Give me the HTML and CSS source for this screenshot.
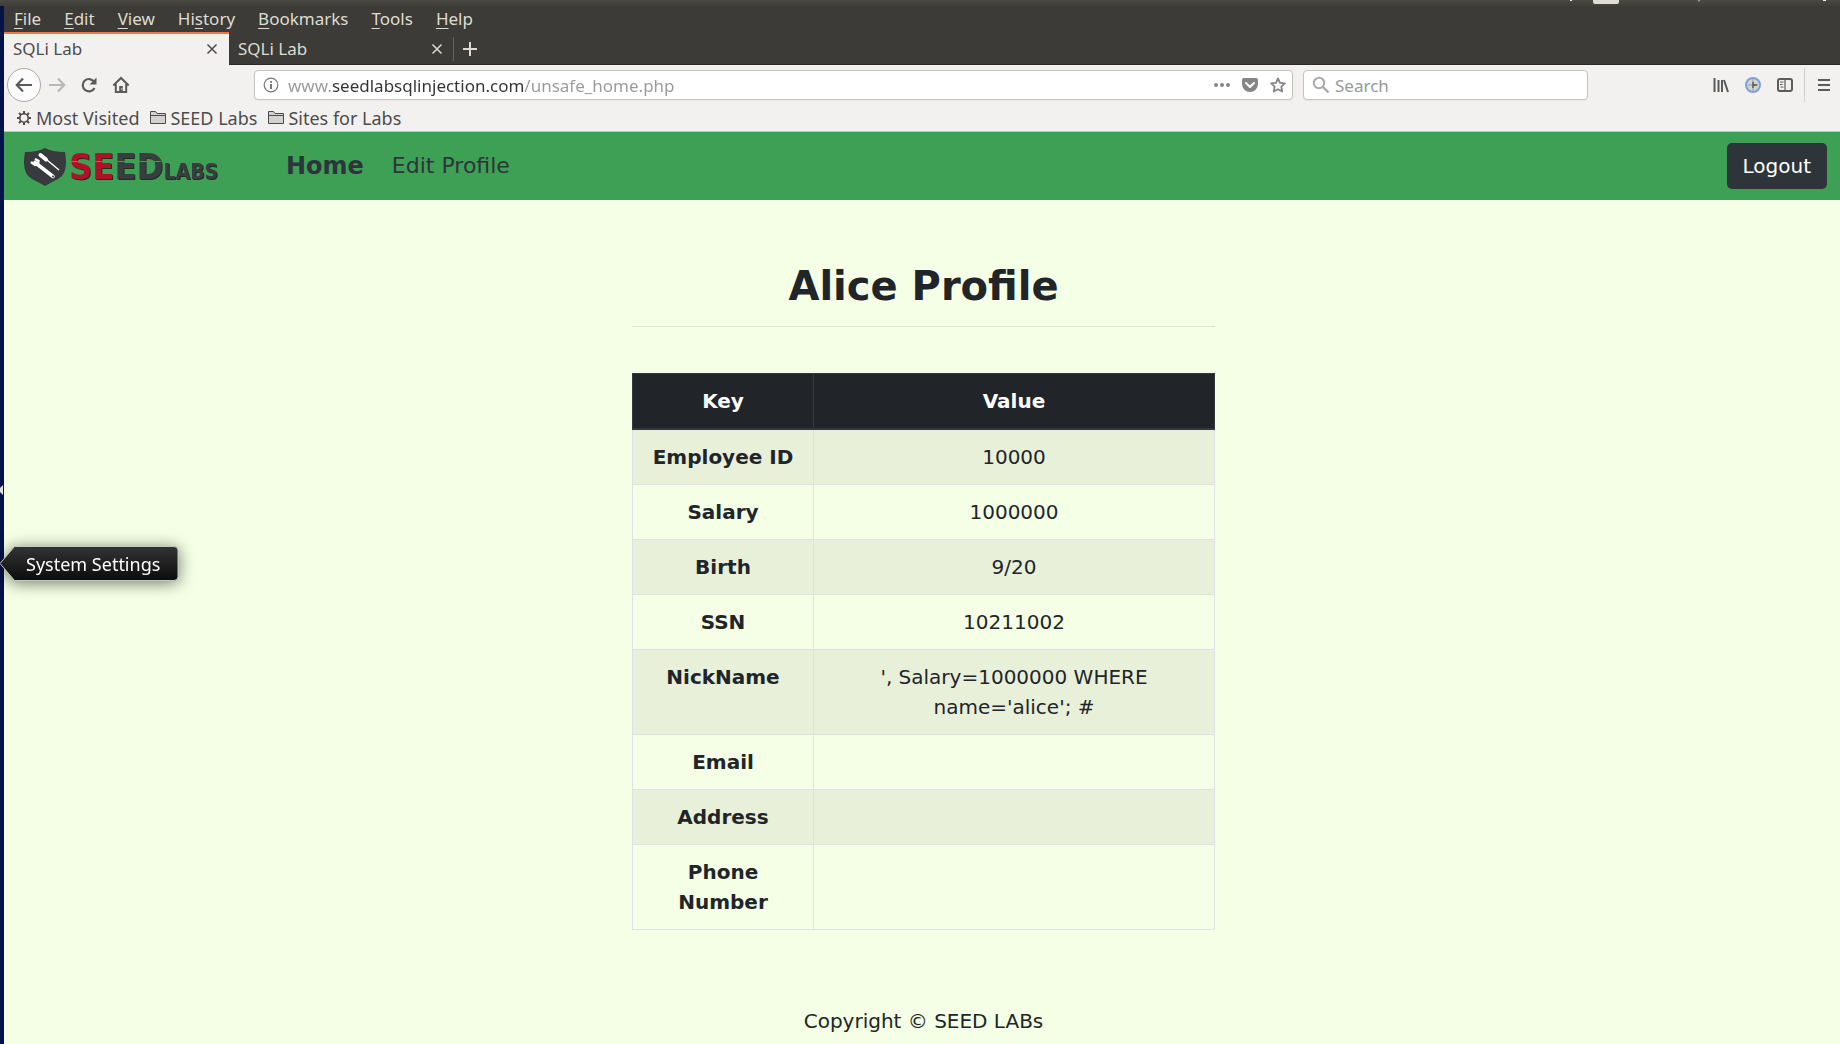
FILE: index.html
```html
<!DOCTYPE html>
<html lang="en">
<head>
<meta charset="utf-8">
<meta name="viewport" content="width=device-width, initial-scale=1">
<title>SQLi Lab</title>
<link rel="stylesheet" href="styles.css">
</head>
<body>
<div class="panel" aria-hidden="true">
  <svg class="panel-icons" width="270" height="5" viewBox="0 0 270 5"><path d="M0 0h2v1H0zM253 0h3v1h-3z" fill="#eee"/><path d="M23 0h26v2q0 2-2 2H25q-2 0-2-2z" fill="#dfdbd2"/><path d="M128 1l2-1" stroke="#999" stroke-width="1.5"/></svg>
</div>
<div class="desktop">
  <header class="chrome">
    <nav class="menubar" aria-label="Application menu">
      <button type="button"><u>F</u>ile</button>
      <button type="button"><u>E</u>dit</button>
      <button type="button"><u>V</u>iew</button>
      <button type="button">Hi<u>s</u>tory</button>
      <button type="button"><u>B</u>ookmarks</button>
      <button type="button"><u>T</u>ools</button>
      <button type="button"><u>H</u>elp</button>
    </nav>
    <div class="tabs">
      <div class="tab tab-active"><span>SQLi Lab</span><button type="button" aria-label="Close tab"><svg width="12" height="12" viewBox="0 0 12 12"><path d="M1.500 1.500l9 9m0-9l-9 9" stroke="currentColor" stroke-width="1.500" fill="none"/></svg></button></div>
      <div class="tab"><span>SQLi Lab</span><button type="button" aria-label="Close tab"><svg width="12" height="12" viewBox="0 0 12 12"><path d="M1.500 1.500l9 9m0-9l-9 9" stroke="currentColor" stroke-width="1.500" fill="none"/></svg></button></div>
      <button class="new-tab" type="button" aria-label="New tab"><svg width="14" height="14" viewBox="0 0 14 14"><path d="M7 0v14M0 7h14" stroke="currentColor" stroke-width="2"/></svg></button>
    </div>
    <div class="toolbar">
      <div class="nav-buttons">
        <button class="back" type="button" aria-label="Back"><svg width="18" height="16" viewBox="0 0 18 16"><path d="M17 8H2M8 1.500L1.800 8 8 14.500" fill="none" stroke="currentColor" stroke-width="2.200"/></svg></button>
        <button class="forward" type="button" aria-label="Forward"><svg width="18" height="16" viewBox="0 0 18 16"><path d="M1 8h15M10 1.500L16.200 8 10 14.500" fill="none" stroke="currentColor" stroke-width="2.200"/></svg></button>
        <button type="button" aria-label="Reload"><svg width="16" height="16" viewBox="0 0 16 16"><path d="M13 4.600A6.200 6.200 0 1 0 13.500 11" fill="none" stroke="currentColor" stroke-width="2.200"/><path d="M15.500 0.500V7.500H8.500z" fill="currentColor"/></svg></button>
        <button type="button" aria-label="Home"><svg width="18" height="18" viewBox="0 0 18 18"><path d="M1.300 9.500L9 2l7.700 7.500M3.800 8v8h10.400V8" fill="none" stroke="currentColor" stroke-width="2"/><path d="M7.200 10h3.600v6H7.200z" fill="currentColor"/><circle cx="9.800" cy="13" r=".7" fill="#f3f1f0"/></svg></button>
      </div>
      <div class="field url-field">
        <svg width="16" height="16" viewBox="0 0 16 16"><circle cx="8" cy="8" r="6.800" fill="none" stroke="#777" stroke-width="1.200"/><path d="M8 7v5M8 4v1.800" stroke="#777" stroke-width="2"/></svg>
        <input class="url" type="text" aria-label="Address" value="www.seedlabsqlinjection.com/unsafe_home.php">
        <div class="page-actions">
          <button type="button" aria-label="Page actions"><svg width="16" height="16" viewBox="0 0 16 16"><g fill="currentColor"><circle cx="2" cy="8" r="2"/><circle cx="8" cy="8" r="2"/><circle cx="14" cy="8" r="2"/></g></svg></button>
          <button type="button" aria-label="Save to Pocket"><svg width="16" height="16" viewBox="0 0 16 16"><path d="M2 1h12q2 0 2 2v4a8 8 0 0 1-16 0V3q0-2 2-2z" fill="currentColor"/><path d="M4 6l4 4 4-4" fill="none" stroke="#fff" stroke-width="2" stroke-linecap="round" stroke-linejoin="round"/></svg></button>
          <button type="button" aria-label="Bookmark this page"><svg width="16" height="16" viewBox="0 0 16 16"><path d="M8 1.500l2 4.300 4.800.600-3.500 3.300.9 4.800L8 12.200l-4.200 2.300.9-4.800L1.200 6.400 6 5.800z" fill="none" stroke="currentColor" stroke-width="1.800" stroke-linejoin="round"/></svg></button>
        </div>
      </div>
      <div class="field search-field">
        <svg width="18" height="18" viewBox="0 0 18 18"><circle cx="7" cy="7" r="5.200" fill="none" stroke="#aaa" stroke-width="2"/><path d="M11 11l5.500 5.500" stroke="#aaa" stroke-width="2.400"/></svg>
        <input type="search" aria-label="Search" placeholder="Search">
      </div>
      <div class="tools">
        <button type="button" aria-label="Library"><svg width="16" height="16" viewBox="0 0 16 16"><path d="M1.500 1v14M5.500 3v12M9 3v12M11 3l4 12" fill="none" stroke="currentColor" stroke-width="2"/></svg></button>
        <button type="button" aria-label="HTTP Header Live"><svg width="16" height="16" viewBox="0 0 16 16"><circle cx="8" cy="8" r="7" fill="#d3d3d0" stroke="#7ba0dd" stroke-width="2"/><path d="M8 2v12M3 8h10" stroke="#999" stroke-width="1"/><path d="M8 5v6M8 8h4" stroke="#555" stroke-width="1.400"/></svg></button>
        <button type="button" aria-label="Sidebars"><svg width="16" height="16" viewBox="0 0 16 16"><rect x="1" y="2" width="14" height="12" rx="2" fill="none" stroke="currentColor" stroke-width="2"/><path d="M8 2v12M3 5h3.500M3 7.500h2.500M3.500 10h3" stroke="currentColor" stroke-width="1.200"/></svg></button>
        <button class="app-menu" type="button" aria-label="Open menu"><svg width="14" height="14" viewBox="0 0 14 14"><path d="M1 2h12M1 7h12M1 12h12" stroke="currentColor" stroke-width="2"/></svg></button>
      </div>
    </div>
    <nav class="bookmarks" aria-label="Bookmarks">
      <a href="#"><svg width="16" height="16" viewBox="0 0 16 16"><circle cx="8" cy="8" r="4.200" fill="none" stroke="currentColor" stroke-width="1.600"/><path d="M8 1v2.500M8 12.500V15M1 8h2.500M12.500 8H15M3 3l1.800 1.800M11.200 11.200L13 13M13 3l-1.800 1.800M4.800 11.200L3 13" stroke="currentColor" stroke-width="2"/></svg>Most Visited</a>
      <a href="#"><svg width="16" height="16" viewBox="0 0 16 16"><path d="M.5 13.500v-12h5l1.500 2h8.500v10z" fill="#d3d2d0" stroke="currentColor"/><path d="M1 5.500h14" stroke="currentColor"/></svg>SEED Labs</a>
      <a href="#"><svg width="16" height="16" viewBox="0 0 16 16"><path d="M.5 13.500v-12h5l1.500 2h8.500v10z" fill="#d3d2d0" stroke="currentColor"/><path d="M1 5.500h14" stroke="currentColor"/></svg>Sites for Labs</a>
    </nav>
  </header>

  <div class="page">
    <nav class="navbar" aria-label="Site">
      <a class="brand" href="#" aria-label="SEED Labs">
        <svg width="200" height="42" viewBox="0 0 200 42">
          <g transform="translate(0 3)">
          <path d="M22 0Q29 4 42 4Q46 25 35 31Q29 34 22 38Q15 34 9 31Q-2 25 2 4Q15 4 22 0z" fill="#383b3d"/>
          <path d="M12 14.500l18 14" stroke="#fff" stroke-width="3.600" stroke-linecap="round"/>
          <path d="M8 14l4 3 3-1 .5-3-3.500-2" fill="none" stroke="#fff" stroke-width="2.400"/>
          <path d="M17.500 7l5.500 4.500" stroke="#fff" stroke-width="4" stroke-linecap="round"/>
          <path d="M24 12l12 10" stroke="#fff" stroke-width="1.400"/>
          <circle cx="30" cy="28.500" r="1" fill="#383b3d"/>
          </g>
          <text class="logo" x="46" y="34"><tspan class="logo-red">SE</tspan>ED<tspan class="logo-labs">LABS</tspan></text>
          <path d="M47 16.500h91" stroke="#3ea055"/>
        </svg>
      </a>
      <a class="link link-current" href="#">Home</a>
      <a class="link" href="#">Edit Profile</a>
      <button class="logout" type="button">Logout</button>
    </nav>
    <main class="content">
      <h1>Alice Profile</h1>
      <hr>
      <table>
        <colgroup><col class="col-key"><col></colgroup>
        <thead><tr><th scope="col">Key</th><th scope="col">Value</th></tr></thead>
        <tbody>
          <tr><th scope="row">Employee ID</th><td>10000</td></tr>
          <tr><th scope="row">Salary</th><td>1000000</td></tr>
          <tr><th scope="row">Birth</th><td>9/20</td></tr>
          <tr><th scope="row">SSN</th><td>10211002</td></tr>
          <tr><th scope="row">NickName</th><td>', Salary=1000000 WHERE name='alice'; #</td></tr>
          <tr><th scope="row">Email</th><td></td></tr>
          <tr><th scope="row">Address</th><td></td></tr>
          <tr><th scope="row">Phone Number</th><td></td></tr>
        </tbody>
      </table>
      <footer>Copyright © SEED LABs</footer>
    </main>
  </div>
</div>
<svg class="launcher-mark" width="4" height="10" viewBox="0 0 4 10" aria-hidden="true"><path d="M3 0v10L0 7V3z" fill="#ddd"/></svg>
<div class="tooltip" role="tooltip">
  <svg width="179" height="35" viewBox="0 0 179 35" aria-hidden="true">
    <defs><linearGradient id="tip" x1="0" y1="0" x2="0" y2="1"><stop offset="0" stop-color="#343434"/><stop offset="1" stop-color="#0c0c0c"/></linearGradient></defs>
    <path d="M0 17.500L14.500.5H174q4 0 4 4v26q0 4-4 4H14.500z" fill="url(#tip)" stroke="#c4c9ba"/>
  </svg>
  <span>System Settings</span>
</div>
</body>
</html>
```
FILE: styles.css
```css
* { box-sizing: border-box; }

body {
  margin: 0;
  position: relative;
  background: #f4ffe5;
  color: #212529;
  font-family: "DejaVu Sans", sans-serif;
  font-size: 20px;
  line-height: 30px;
}

button {
  border: 0;
  padding: 0;
  background: none;
  color: inherit;
  font: inherit;
}

a { color: inherit; text-decoration: none; }
svg { display: block; flex: none; }

.panel {
  display: flex;
  justify-content: flex-end;
  height: 6px;
  background: linear-gradient(#4a4943, #3f3e39);
}

.desktop {
  min-height: calc(100vh - 6px);
  border-left: 4px solid #04124a;
}

/* Browser chrome */
.chrome {
  background: #f3f1f0;
  border-bottom: 1px solid #c9c2bd;
  color: #4c4c4c;
  font-family: "Noto Sans", sans-serif;
  font-size: 17px;
  line-height: 26px;
}

.menubar {
  display: flex;
  gap: 23px;
  padding: 0 10px;
  background: #3c3b37;
  color: #dfdbd2;
}

.menubar u { text-underline-offset: 3px; }

.tabs {
  display: flex;
  height: 33px;
  background: #3c3b37;
  color: #dfdbd2;
  box-shadow: inset 0 -1px #2b2a27;
}

.tab {
  display: flex;
  align-items: center;
  justify-content: space-between;
  width: 225px;
  padding: 0 11px 0 9px;
}

.tab + .tab { background: linear-gradient(#66645e, #66645e) right center / 1px 24px no-repeat; }

.tab-active {
  background: #f3f1f0;
  color: #4c4c4c;
  box-shadow: inset 0 2px #f07746;
}

.new-tab { padding: 0 9px; }

.toolbar {
  display: flex;
  align-items: center;
  gap: 10px;
  height: 40px;
  padding: 0 9px 0 3px;
}

.nav-buttons {
  display: flex;
  align-items: center;
  gap: 15px;
  margin-right: 114px;
  color: #5b5b5b;
}

.back {
  display: grid;
  place-items: center;
  width: 34px;
  height: 34px;
  border: 1px solid #aaa;
  border-radius: 50%;
  background: #fcfcfc;
}

.nav-buttons .forward { margin-left: -8px; color: #b8b8b8; }

.field {
  display: flex;
  align-items: center;
  height: 30px;
  border: 1px solid #c6c2be;
  border-radius: 4px;
  background: #fff;
  box-shadow: 0 1px 2px #0000000d;
}

.field input {
  flex: 1;
  min-width: 0;
  height: 28px;
  border: 0;
  padding: 0;
  outline: 0;
  background: none;
  color: #4c4c4c;
  font: inherit;
}

.field input::placeholder { color: #999; opacity: 1; }

.url-field {
  flex: 1;
  gap: 9px;
  padding: 0 6px 0 8px;
}

/* The host name is darker than the rest of the address. */
.url-field .url {
  background: linear-gradient(to right, #999 44px, #333 44px 236px, #999 236px);
  -webkit-background-clip: text;
  background-clip: text;
  color: transparent;
}

.page-actions { display: flex; gap: 12px; color: #858585; }

.search-field {
  width: 285px;
  gap: 5px;
  padding: 0 8px;
}

.tools {
  display: flex;
  align-items: center;
  gap: 16px;
  margin-left: 115px;
  color: #5b5b5b;
}

.app-menu {
  padding: 10px 0 10px 12px;
  margin-left: -5px;
  border-left: 1px solid #d2cfcc;
}

.bookmarks {
  display: flex;
  gap: 11px;
  padding: 0 12px;
  font-size: 18px;
}

.bookmarks a { display: flex; align-items: center; gap: 4px; }

/* Web page */
.navbar {
  display: flex;
  align-items: center;
  height: 68px;
  padding: 0 13px 0 19px;
  background: #3ea055;
  color: #2d353b;
}

.brand { margin-right: 63px; }

.logo {
  fill: #3a3d40;
  filter: drop-shadow(1px 1px 0 #1f2d23);
  font-family: "DejaVu Sans Condensed", "DejaVu Sans", sans-serif;
  font-size: 36px;
  font-weight: bold;
}

.logo-labs { font-size: 21px; }
.logo-red { fill: #b01028; }

.link { margin-right: 28px; font-size: 22px; }
.link-current { font-size: 24px; font-weight: bold; }

.logout {
  margin-left: auto;
  padding: 8px 16px;
  border-radius: 5px;
  background: #2d353b;
  color: #fff;
}

.content {
  max-width: 610px;
  margin: 0 auto;
  padding: 61px 12px 0 15px;
  text-align: center;
}

h1 {
  margin: 0;
  font-size: 40px;
  line-height: 50px;
}

hr {
  margin: 15px 0 46px;
  border: 0;
  border-top: 1px solid #dbe5cd;
}

table {
  width: 100%;
  border-collapse: collapse;
  table-layout: fixed;
}

.col-key { width: 181px; }

th, td {
  padding: 12px 16px;
  border: 1px solid #dee2e6;
  vertical-align: top;
}

td { padding: 12px 48px; }

thead th {
  border-color: #32383e;
  border-bottom-width: 2px;
  background: #212529;
  color: #fff;
}

tbody tr:nth-child(odd) { background: #e8f0d9; }

footer { padding: 76px 0 8px; }

/* Desktop overlays */
.launcher-mark { position: absolute; left: 0; top: 485px; }

.tooltip {
  position: absolute;
  left: 0;
  top: 546px;
  display: grid;
  align-items: center;
  filter: drop-shadow(0 2px 8px #00000088);
  color: #fff;
  font-family: "Noto Sans", sans-serif;
  font-size: 18px;
}

.tooltip > * { grid-area: 1 / 1; }
.tooltip span { padding-left: 26px; }
```
